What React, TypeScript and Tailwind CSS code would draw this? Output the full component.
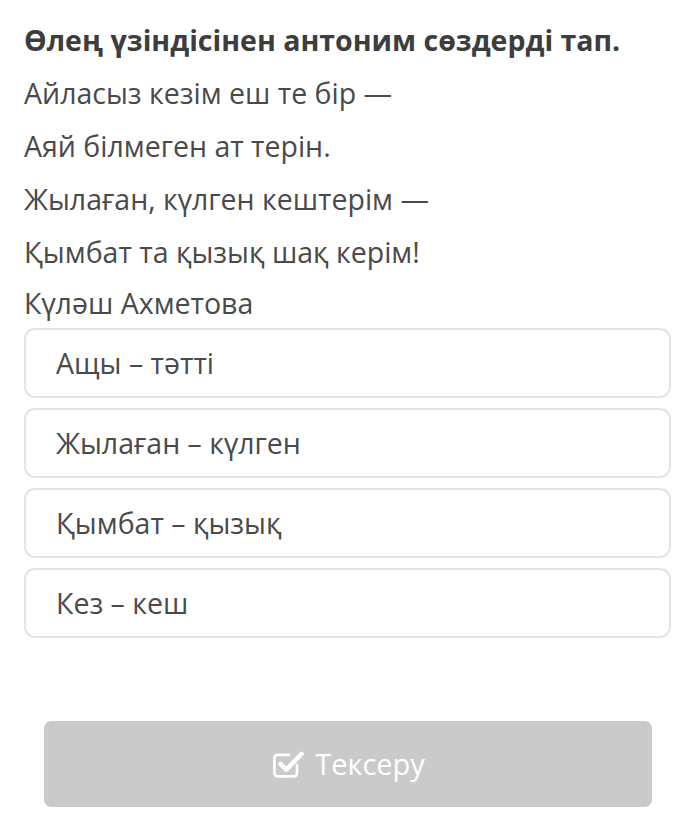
import React from 'react';

const lines = [
    'Айласыз кезім еш те бір —',
    'Аяй білмеген ат терін.',
    'Жылаған, күлген кештерім —',
    'Қымбат та қызық шақ керім!',
];

const options = ['Ащы – тәтті', 'Жылаған – күлген', 'Қымбат – қызық', 'Кез – кеш'];

const CheckSquare: React.FC = () => (
    <svg width="34" height="34" viewBox="0 0 30 30" fill="none">
        <path d="M23 16v7a3 3 0 0 1-3 3H6a3 3 0 0 1-3-3V10a3 3 0 0 1 3-3h10" stroke="white" strokeWidth="2.4" strokeLinecap="round" strokeLinejoin="round" />
        <path d="M8.5 15l5 5L27 6" stroke="white" strokeWidth="4" strokeLinecap="round" strokeLinejoin="round" />
    </svg>
);

export default function App() {
    return (
        <div className="w-[679px] h-[825px] bg-white font-['Open_Sans',sans-serif] text-[#4a4a4a]">
            <div className="px-6 pt-[14px]">
                <h1 className="text-[28.5px] font-bold leading-[53px] text-[#3d3d3d]">
                    Өлең үзіндісінен антоним сөздерді тап.
                </h1>
                {lines.map((l) => (
                    <p key={l} className="text-[28.5px] leading-[53px]">{l}</p>
                ))}
                <p className="text-[28.5px] leading-[49px]">Күләш Ахметова</p>
                <div className="flex flex-col gap-[10px]">
                    {options.map((o) => (
                        <div key={o} className="h-[70px] w-[647px] rounded-[11px] border-2 border-[#e3e3e3] flex items-center pl-[30px] text-[28.5px]">
                            {o}
                        </div>
                    ))}
                </div>
            </div>
            <div className="px-[44px] mt-[83px]">
                <button className="w-[608px] h-[86px] rounded-[7px] bg-[#cacaca] flex items-center justify-center gap-[10px] text-white text-[29px]">
                    <CheckSquare />
                    <span>Тексеру</span>
                </button>
            </div>
        </div>
    );
}
